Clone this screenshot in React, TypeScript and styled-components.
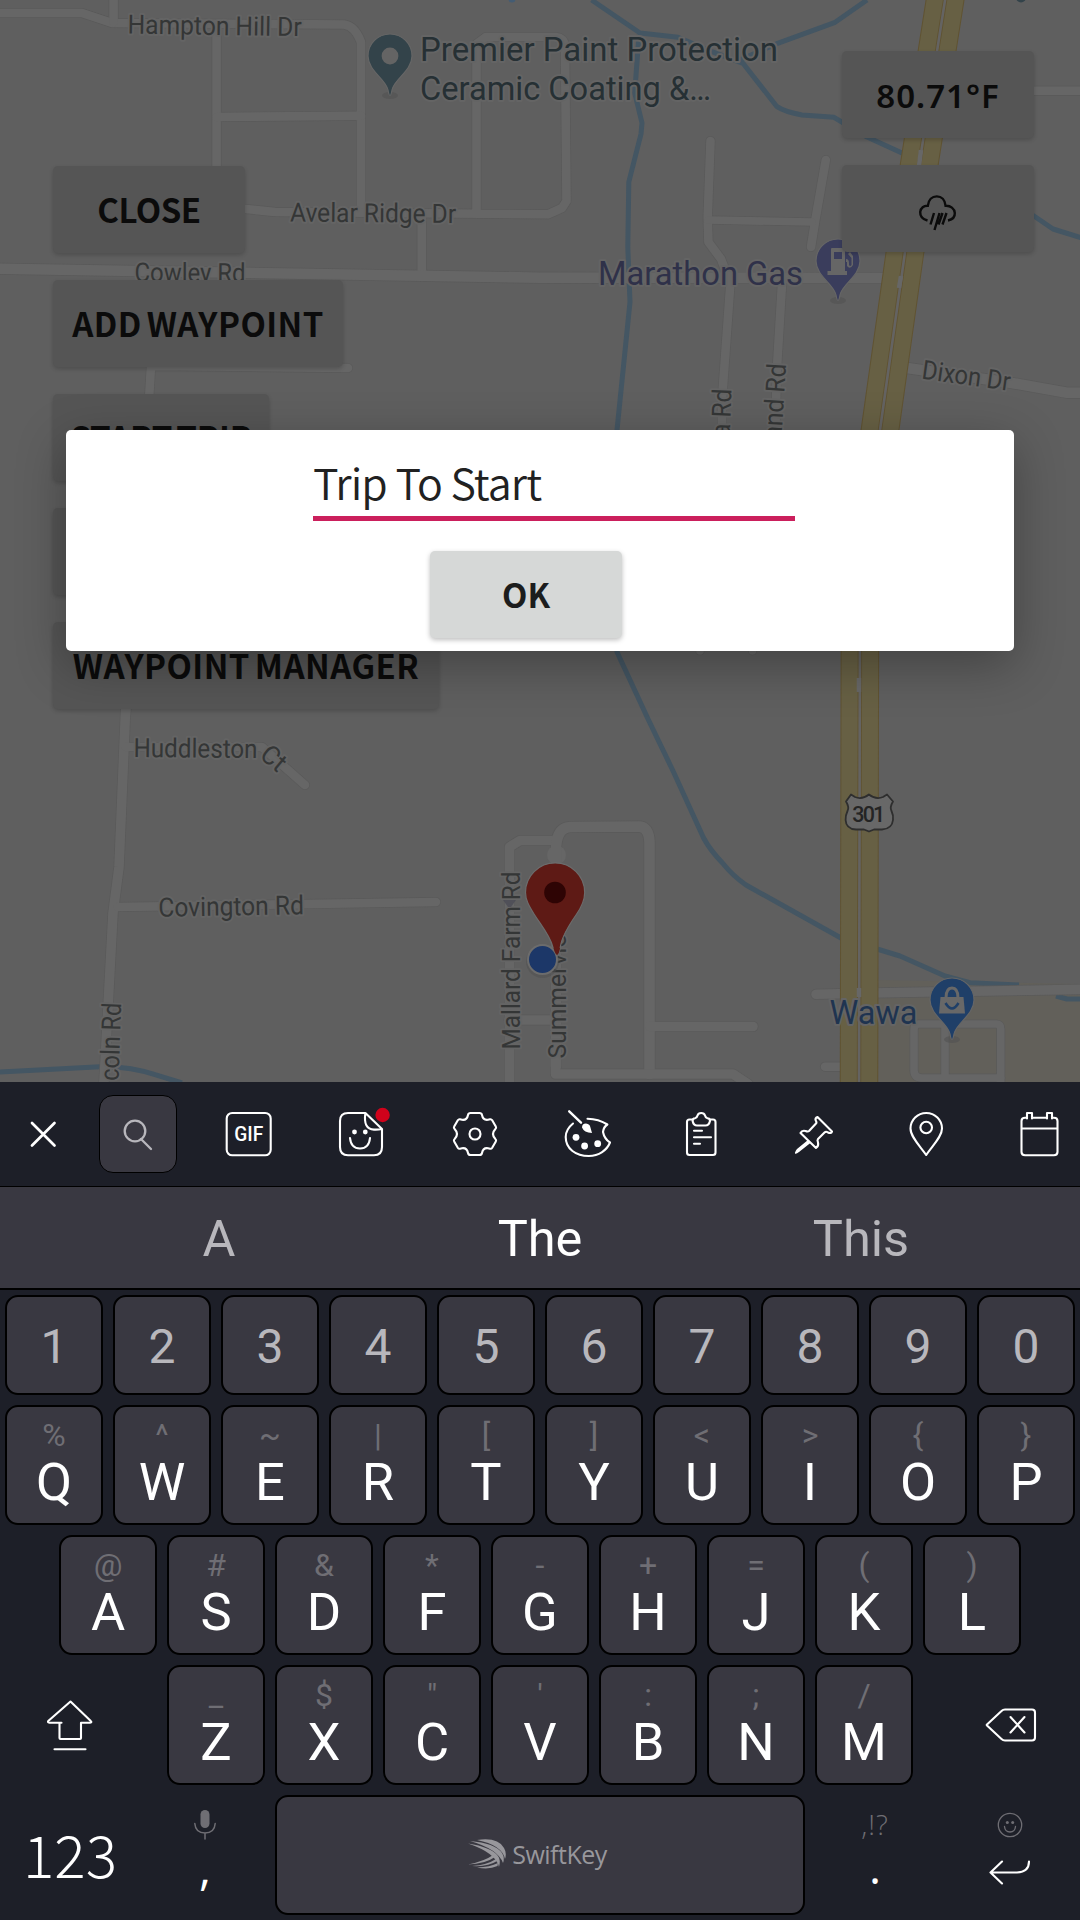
import React from "react";
import styled, { createGlobalStyle } from "styled-components";

const GlobalStyle = createGlobalStyle`
  *, *::before, *::after { box-sizing: border-box; }
  html, body { margin: 0; padding: 0; background: #1d1f28; }
  body { font-family: Roboto, "Noto Sans", sans-serif; }
  button { font: inherit; border: 0; padding: 0; background: none; color: inherit; }
`;

const SLATE = '"Noto Sans CJK JP", "Open Sans", sans-serif';

const Screen = styled.main`
  width: 1080px;
  height: 1920px;
  display: flex;
  flex-direction: column;
  overflow: hidden;
`;

/* ---------- Map ---------- */

const MapArea = styled.section`
  position: relative;
  height: 1082px;
  flex: none;
  overflow: hidden;
  background: #5f5f5f;
`;

const MapCanvas = styled.svg`
  position: absolute;
  inset: 0;
  width: 1080px;
  height: 1082px;
`;

const Controls = styled.div`
  position: relative;
  display: flex;
  justify-content: space-between;
  padding: 51px 46px 0 53px;
`;

const ControlColumn = styled.div<{ $offset?: number }>`
  display: flex;
  flex-direction: column;
  align-items: flex-start;
  gap: 27px;
  padding-top: ${(p) => p.$offset ?? 0}px;
`;

const MapButton = styled.button<{ $width?: number; $spacing?: number }>`
  width: ${(p) => p.$width ?? 192}px;
  height: 87px;
  display: flex;
  align-items: center;
  justify-content: center;
  padding-bottom: 2px;
  white-space: nowrap;
  border-radius: 5px;
  background: #555555;
  box-shadow: 0 2px 4px rgba(0, 0, 0, 0.18);
  color: #0b0b0b;
  font-family: ${SLATE};
  font-weight: 700;
  font-size: 33px;
  line-height: 40px;
  letter-spacing: ${(p) => p.$spacing ?? 0}px;
  word-spacing: -3px;
`;

const Temperature = styled(MapButton)`
  padding: 2px 0 0;
  font-family: "Noto Sans", sans-serif;
  font-weight: 600;
`;

const WeatherButton = styled(MapButton)`
  padding: 9px 0 0;
`;

/* ---------- Dialog ---------- */

const Dialog = styled.div`
  position: absolute;
  left: 66px;
  top: 430px;
  width: 948px;
  height: 221px;
  display: flex;
  flex-direction: column;
  align-items: center;
  padding-top: 19px;
  border-radius: 5px;
  background: #ffffff;
  box-shadow: 0 14px 50px rgba(0, 0, 0, 0.3);
`;

const TripField = styled.div`
  width: 482px;
  height: 72px;
  margin-left: 28px;
  border-bottom: 5px solid #cb1f5c;
  color: #212121;
  font-family: ${SLATE};
  font-weight: 350;
  font-size: 43px;
  line-height: 65px;
  letter-spacing: -0.95px;
  white-space: nowrap;
`;

const OkButton = styled(MapButton)`
  margin: 30px 28px 0 0;
  flex: none;
  background: #d6d8d7;
  color: #1c1d1d;
  box-shadow: 0 2px 5px rgba(0, 0, 0, 0.26);
`;

/* ---------- Keyboard ---------- */

const Keyboard = styled.section`
  flex: 1;
  display: flex;
  flex-direction: column;
  background: #1d1f28;
`;

const Toolbar = styled.div`
  height: 104px;
  display: flex;
  align-items: center;
  overflow: hidden;
`;

const ToolSlot = styled.button<{ $width?: number }>`
  width: ${(p) => p.$width ?? 112.8}px;
  height: 104px;
  flex: none;
  display: flex;
  align-items: center;
  justify-content: center;
`;

const SearchTile = styled.span`
  width: 78px;
  height: 78px;
  display: flex;
  align-items: center;
  justify-content: center;
  border: 1px solid #000;
  border-radius: 14px;
  background: #393841;
`;

const ToolIcon = styled.svg<{ $stroke?: number }>`
  width: 52px;
  height: 52px;
  flex: none;
  overflow: visible;
  fill: none;
  stroke: #ffffff;
  stroke-width: ${(p) => p.$stroke ?? 2.1};
  stroke-linecap: round;
  stroke-linejoin: round;
`;

const Suggestions = styled.div`
  height: 104px;
  display: grid;
  grid-template-columns: repeat(3, 321px);
  justify-content: center;
  border-top: 1px solid #000;
  border-bottom: 2px solid #000;
  background: #393841;
`;

const Suggestion = styled.span<{ $main?: boolean }>`
  text-align: center;
  font-size: 50.5px;
  line-height: 104px;
  color: ${(p) => (p.$main ? "#ffffff" : "#b8b7bc")};
`;

const Keys = styled.div`
  display: flex;
  flex-direction: column;
  gap: 10px;
  padding: 5px;
`;

const KeyRow = styled.div<{ $indent?: number; $height?: number }>`
  display: flex;
  gap: 10px;
  height: ${(p) => p.$height ?? 120}px;
  padding: 0 ${(p) => p.$indent ?? 0}px;
`;

const Key = styled.button`
  width: 98px;
  flex: none;
  display: flex;
  flex-direction: column;
  align-items: center;
  border: 2px solid #000;
  border-radius: 13px;
  background: #393841;
`;

const Digit = styled.span`
  font-size: 48px;
  line-height: 99px;
  color: #b8b7bc;
`;

const Hint = styled.span`
  height: 52px;
  padding-top: 9px;
  font-size: 32px;
  line-height: 38px;
  color: #6f6e74;
`;

const Letter = styled.span`
  font-size: 52.5px;
  line-height: 44px;
  margin-top: 1px;
  color: #ffffff;
`;

const PlainKey = styled.button<{ $width: number; $top?: number; $left?: number; $right?: number }>`
  width: ${(p) => p.$width}px;
  height: 120px;
  flex: none;
  display: flex;
  flex-direction: column;
  align-items: center;
  padding: ${(p) => p.$top ?? 0}px ${(p) => p.$right ?? 0}px 0 ${(p) => p.$left ?? 0}px;
`;

const KeyDrawing = styled.svg`
  flex: none;
  fill: none;
  stroke: #ffffff;
  stroke-width: 2.1;
  stroke-linecap: round;
  stroke-linejoin: round;
`;

const NumberMode = styled.span`
  font-family: ${SLATE};
  font-weight: 300;
  font-size: 58.5px;
  line-height: 60px;
  color: #ffffff;
`;

const PunctuationHint = styled.span`
  font-family: "Open Sans", sans-serif;
  font-weight: 300;
  font-size: 28px;
  line-height: 30px;
  letter-spacing: 1px;
  color: #6f6e74;
`;

const Punctuation = styled.span<{ $drop?: number }>`
  margin-top: ${(p) => p.$drop ?? 0}px;
  font-family: "Open Sans", sans-serif;
  font-size: 46px;
  line-height: 44px;
  color: #ffffff;
`;

const SpaceBar = styled(Key)`
  width: 530px;
  flex-direction: row;
  justify-content: center;
  gap: 5px;
  padding: 0 6px 2px 0;
`;

const Brand = styled.span`
  font-family: "Open Sans", sans-serif;
  font-size: 25px;
  line-height: 34px;
  letter-spacing: -0.5px;
  color: #98979c;
`;

/* ---------- Map drawing ---------- */

const roads: Array<[string, number]> = [
  ["M0 13H82L112 23L344 24.5Q355 26 361 42V213", 9],
  ["M113.6 0V22", 9],
  ["M216.6 28V200", 9],
  ["M217 117L361 115.7", 9],
  ["M236 208L275 212L548 214.3L562 208L566.5 201L565 46Q564 38 556 37H486L476.5 44V214", 9],
  ["M421.8 215V276", 9],
  ["M0 268.7L540 277.7L890 278", 11],
  ["M126 715L149 400L151 366L348 368", 9],
  ["M126 700L119 867L113 913L104 1082", 10],
  ["M126 747H262L305 785", 9],
  ["M118 907L436 902", 9],
  ["M509.500 1082V847L520 840.5H554", 10],
  ["M556 1066V850Q556 828 570 827L640 826.500Q649 828 649.500 842V1074", 11],
  ["M509 1020H555", 10],
  ["M650 1026.5H753", 10],
  ["M555.5 1060V1074H733L748 1084", 10],
  ["M710.5 141L707.7 217L708.4 242L721 259L730.4 283L722 400V440", 9],
  ["M825.8 160L815 222L811 247", 9],
  ["M708 220L812 222", 8],
  ["M782 284L777 367L775 440", 9],
  ["M700 640V651M752.5 640V651", 8],
  ["M1030 90.7H1080", 9],
  ["M900 367L1012 383L1067 392.7H1085", 11],
  ["M816 994.3L884 992.7L1085 989.3", 10],
  ["M825 1066.7H850", 9],
  ["M919 1024H996Q1000.7 1024 1000.7 1029V1082M919 1024Q914 1024 914 1030V1070Q914 1078 922 1078H1001M945 1024V1078", 8],
];

const streams = [
  "M591.6 0L640 33L678 37.3L712 51.7L743 63.3L777 106.7Q785 112 802 115L834 117.3L867 137L902 153L1034 216L1053 229L1085 239",
  "M867 0L834.4 22.7L777.6 43.3L740 60",
  "M639 35L634.7 93L642 123L641 134L628.8 182L627.8 247L630 302L617 430V652L648.5 720L672.6 770L703.6 838Q710 850 722.5 863Q733 876 746 885L841 938L900 956L945 976L970 982.7L1019 985",
  "M1056 996L1067 999H1085",
  "M0 1072L100 1066.7Q130 1066 155 1074.7L182 1083",
];

const highway = "M946 -6L919 166L905 252L880 430L860 590L859 1090";

type LabelData = { t: string; x: number; y: number; w?: number; r?: number; end?: boolean };
const streetLabels: LabelData[] = [
  { t: "Hampton Hill Dr", x: 127.5, y: 33.5, w: 174, r: 0.9 },
  { t: "Avelar Ridge Dr", x: 290, y: 221.5, w: 166, r: 0.5 },
  { t: "Cowley Rd", x: 134.5, y: 281.5, w: 111, r: 0.3 },
  { t: "Dixon Dr", x: 921, y: 378.5, w: 89, r: 8 },
  { t: "a Rd", x: 731.5, y: 389, w: 48, r: -88, end: true },
  { t: "and Rd", x: 786, y: 364, w: 76, r: -86.5, end: true },
  { t: "Huddleston", x: 133.5, y: 757, w: 124, r: 0.5 },
  { t: "Ct", x: 258.5, y: 757, w: 25, r: 40 },
  { t: "Covington Rd", x: 158.5, y: 916.7, w: 145.5, r: -1 },
  { t: "coln Rd", x: 118.5, y: 1081, w: 78, r: -88 },
  { t: "Mallard Farm Rd", x: 519.5, y: 1049.5, w: 178, r: -90 },
  { t: "Summervie", x: 566, y: 1058.5, w: 124, r: -90 },
];

const StreetName = styled.text`
  font-family: Roboto, sans-serif;
  font-size: 26.5px;
  fill: #343636;
  stroke: #646464;
  stroke-width: 4px;
  paint-order: stroke;
  stroke-linejoin: round;
`;

const PlaceName = styled(StreetName)<{ $color: string }>`
  font-size: 34px;
  fill: ${(p) => p.$color};
`;

const ShieldNumber = styled.text`
  font-family: Roboto, sans-serif;
  font-weight: 500;
  font-size: 21.5px;
  fill: #242424;
`;

const GifText = styled.text`
  font-family: Roboto, sans-serif;
  font-weight: 500;
  font-size: 20px;
  fill: #ffffff;
  stroke: none;
`;

const PinShape = ({ x, y, color }: { x: number; y: number; color: string }) => (
  <g>
    <ellipse cx={x} cy={y + 39.5} rx="8" ry="3.5" fill="#525252" opacity=".6" />
    <path
      d={`M${x} ${y + 39.5}Q${x - 1} ${y + 39.5} ${x - 2} ${y + 34}C${x - 4} ${y + 23} ${x - 22} ${y + 15} ${x - 22} ${y}A22 22 0 0 1 ${x + 22} ${y}C${x + 22} ${y + 15} ${x + 4} ${y + 23} ${x + 2} ${y + 34}Q${x + 1} ${y + 39.5} ${x} ${y + 39.5}Z`}
      fill={color}
      stroke="#666"
      strokeWidth="1.2"
    />
  </g>
);

const MapDrawing = () => (
  <MapCanvas viewBox="0 0 1080 1082">
    <rect width="1080" height="1082" fill="#5f5f5f" />
    <path d="M878 980L1080 984V1082H878Z" fill="#62605a" />
    <g fill="none" stroke="#445663" strokeWidth="5" strokeLinejoin="round">
      {streams.map((d) => <path key={d} d={d} />)}
    </g>
    <g fill="none" stroke="#5a5a5a" strokeLinecap="round" strokeLinejoin="round">
      {roads.map(([d, w]) => <path key={d} d={d} strokeWidth={w + 1} />)}
    </g>
    <circle cx="556.5" cy="855" r="9.500" fill="#666666" />
    <g fill="none" stroke="#666666" strokeLinecap="round" strokeLinejoin="round">
      {roads.map(([d, w]) => <path key={d} d={d} strokeWidth={w - 0.4} />)}
    </g>
    <g fill="none" strokeLinejoin="round">
      <path d={highway} stroke="#605332" strokeWidth="38.5" />
      <path d={highway} stroke="#676044" strokeWidth="36.5" />
      <path d={highway} stroke="#605332" strokeWidth="4.4" />
      <path d={highway} stroke="#646362" strokeWidth="2.6" />
      <path d="M921 150L918.5 170M901 276L899 288M859 678V692M859 988V997" stroke="#676767" strokeWidth="4.5" />
    </g>
    {streetLabels.map((l) => (
      <StreetName
        key={l.t}
        x={l.x}
        y={l.y}
        textAnchor={l.end ? "end" : "start"}
        textLength={l.w}
        lengthAdjust="spacingAndGlyphs"
        transform={`rotate(${l.r ?? 0} ${l.x} ${l.y})`}
      >
        {l.t}
      </StreetName>
    ))}
    <path d="M503 900H516L511 907H508Z" fill="#4b4b55" opacity=".8" />
    <PlaceName $color="#263034" x="420" y="61" textLength="358" lengthAdjust="spacingAndGlyphs">Premier Paint Protection</PlaceName>
    <PlaceName $color="#263034" x="420" y="100" textLength="291" lengthAdjust="spacingAndGlyphs">Ceramic Coating &amp;…</PlaceName>
    <PlaceName $color="#2f3149" x="598" y="285.000" textLength="205" lengthAdjust="spacingAndGlyphs">Marathon Gas</PlaceName>
    <PlaceName $color="#1f3450" x="829.500" y="1024" textLength="88" lengthAdjust="spacingAndGlyphs">Wawa</PlaceName>

    <PinShape x={390} y={56} color="#33434a" />
    <circle cx="390" cy="56" r="8.400" fill="#646464" />
    <PinShape x={838} y={261} color="#3a3d5c" />
    <g fill="#666">
      <path d="M831 249Q831 248 832 248H844Q845 248 845 249V271H847V275H827.500V271H831ZM834 252V259H842V252Z" fillRule="evenodd" />
      <path d="M846 259Q849 259 849 263V265Q850 267 851.500 265V258L848 254L850 252L853 256V265Q850 270 847 266V262H846Z" />
    </g>
    <PinShape x={952} y={1000} color="#1f3f68" />
    <path d="M940.500 997H963.500L965 1013.500H939Z" fill="#686868" />
    <path d="M946 998Q946 988 952 988Q958 988 958 998" fill="none" stroke="#686868" strokeWidth="3" />
    <path d="M945.500 1003Q952 1014 958.500 1003" fill="none" stroke="#1f3f68" strokeWidth="2.500" />
    <circle cx="1021" cy="-2.500" r="5" fill="#33434a" />
    <circle cx="512" cy="-1" r="3.500" fill="#445c73" />

    <path d="M851 794.500L855 797Q862 800 868.900 794.500Q876 800 883 797L887 794.500L893 801.500Q889.500 807 891.500 811Q893.500 815 893 820Q892 829 882 829.500H874L869 831.500L864 829.500H856Q846 829 845.600 820Q845.500 815 847.500 811Q849.500 807 846 801.500Z" fill="#686868" stroke="#2e2e2e" strokeWidth="1.800" strokeLinejoin="round" />
    <ShieldNumber x="868.800" y="821.500" textAnchor="middle" textLength="33">301</ShieldNumber>

    <path d="M557 955Q554.500 954 552.500 946C550 936 543 928 534 914C529 906 525.500 900 525.500 892.500A29.600 29.600 0 0 1 584.700 892.500C584.700 901 581 908 576 915C567 928 562 937 560.500 946Q559.500 954 557 955Z" fill="#5e1a15" stroke="#6c6c6c" strokeWidth="1.200" />
    <circle cx="555" cy="892.500" r="10.800" fill="#2e0404" />
    <circle cx="542.500" cy="961.500" r="16.500" fill="#505050" opacity=".5" />
    <circle cx="542.500" cy="959.500" r="14.500" fill="#1c3768" stroke="#6c6c6c" strokeWidth="2" />
    <path d="M557 955Q555 954 553.500 948L560 948Q559 954 557 955Z" fill="#5e1a15" />
  </MapCanvas>
);

/* ---------- Keyboard data ---------- */

const digits = "1234567890".split("");
const rowQ = ["Q%", "W^", "E~", "R|", "T[", "Y]", "U<", "I>", "O{", "P}"];
const rowA = ["A@", "S#", "D&", "F*", "G-", "H+", "J=", "K(", "L)"];
const rowZ = ["Z_", "X$", 'C"', "V'", "B:", "N;", "M/"];

const LetterKey = ({ pair }: { pair: string }) => (
  <Key>
    <Hint>{pair[1]}</Hint>
    <Letter>{pair[0]}</Letter>
  </Key>
);

const App = () => (
  <>
    <GlobalStyle />
    <Screen>
      <MapArea>
        <MapDrawing />
        <Controls>
          <ControlColumn $offset={115}>
            <MapButton $spacing={-0.5}>CLOSE</MapButton>
            <MapButton $width={290} $spacing={0.45}>ADD WAYPOINT</MapButton>
            <MapButton $width={216} $spacing={-0.2}>START TRIP</MapButton>
            <MapButton $width={216} />
            <MapButton $width={386} $spacing={0.45}>WAYPOINT MANAGER</MapButton>
          </ControlColumn>
          <ControlColumn>
            <Temperature $spacing={1}>80.71°F</Temperature>
            <WeatherButton aria-label="Rain">
              <svg width="40" height="40" viewBox="0 0 40 40" fill="none" stroke="#0b0b0b" strokeWidth="2.400" strokeLinecap="butt">
                <path d="M9.500 27.500C4 26 2 23 2.200 19C2.600 15 6 12.500 9.800 12.800C10.500 7 14 3.400 18.800 3.400C23.500 3.400 27 7 27.600 12.800C32.500 12.500 36.500 15.500 36.800 20C37 23.500 34.500 26.500 30 27.500" />
                <path d="M16 20L12.500 31.500M21.500 20L16.500 37M24.500 20L20.500 31.500M28.500 20L24.500 31.500" />
              </svg>
            </WeatherButton>
          </ControlColumn>
        </Controls>
        <Dialog>
          <TripField>Trip To Start</TripField>
          <OkButton>OK</OkButton>
        </Dialog>
      </MapArea>

      <Keyboard>
        <Toolbar>
          <ToolSlot $width={83} aria-label="Close">
            <ToolIcon viewBox="0 0 52 52" $stroke={2.700}><path d="M16 15L38.500 37.500M38.500 15L16 37.500" /></ToolIcon>
          </ToolSlot>
          <ToolSlot $width={110} aria-label="Search">
            <SearchTile>
              <ToolIcon viewBox="0 0 52 52" $stroke={2.300}><g stroke="#b8b7bc"><circle cx="23" cy="23" r="10.300" /><path d="M29 31L39 41" /></g></ToolIcon>
            </SearchTile>
          </ToolSlot>
          <ToolSlot aria-label="GIF">
            <ToolIcon viewBox="0 0 52 52">
              <rect x="3.700" y="5" width="44" height="42.300" rx="5.500" />
              <GifText x="25.700" y="33" textAnchor="middle" textLength="29" lengthAdjust="spacingAndGlyphs">GIF</GifText>
            </ToolIcon>
          </ToolSlot>
          <ToolSlot aria-label="Stickers">
            <ToolIcon viewBox="0 0 52 52">
              <path d="M29.400 5H12Q4 5 4 13V39Q4 47.300 12 47.300H38Q46 47.300 46 39V21ZM29.400 5Q27 21 38 21.600Q42 21.800 46 21" />
              <path d="M14 30Q15 40.500 24 40.500Q33 40.500 34 30" />
              <g fill="#fff" stroke="none"><circle cx="18.500" cy="24" r="2.400" /><circle cx="29.300" cy="24" r="2.400" /></g>
              <circle cx="46.600" cy="7" r="7.200" fill="#d0021b" stroke="none" />
            </ToolIcon>
          </ToolSlot>
          <ToolSlot aria-label="Settings">
            <ToolIcon viewBox="0 0 52 52">
              <path d="M30.500 5Q32.600 5 33 7Q34 12.500 39 11.800L41 11.300Q42.400 11 43.200 12.300L46.800 18.600Q47.600 20 46.400 21Q41.600 26 46.400 31Q47.600 32 46.800 33.400L43.200 39.700Q42.400 41 41 40.700L39 40.200Q34 39.500 33 45Q32.600 47 30.500 47H21.500Q19.400 47 19 45Q18 39.500 13 40.200L11 40.700Q9.600 41 8.800 39.700L5.200 33.400Q4.400 32 5.600 31Q10.400 26 5.600 21Q4.400 20 5.200 18.600L8.800 12.300Q9.600 11 11 11.300L13 11.800Q18 12.500 19 7Q19.400 5 21.500 5Z" />
              <circle cx="26" cy="26" r="5.500" />
            </ToolIcon>
          </ToolSlot>
          <ToolSlot aria-label="Themes">
            <ToolIcon viewBox="0 0 52 52">
              <path d="M11 15.500C5.500 20 3.700 24 3.700 29C3.700 41 14 48 26.800 48C37 48 45 42 48 34.500C44 32 42 29 41 24C41.500 20 43 18 45.400 16.500C40 13 33 10.800 25.500 10.700" />
              <path d="M7.200 3.300L19 14.700" strokeWidth="2.400" />
              <path d="M20 19.500Q20 15.500 24 15.500Q28 16 28.300 19L30 25Q22 24.500 20 19.500Z" fill="#fff" stroke="none" />
              <g fill="#fff" stroke="none"><circle cx="14" cy="29.300" r="3.400" /><circle cx="22.600" cy="38" r="3.400" /><circle cx="35.700" cy="35.700" r="3.400" /></g>
            </ToolIcon>
          </ToolSlot>
          <ToolSlot aria-label="Clipboard">
            <ToolIcon viewBox="0 0 52 52">
              <path d="M17.500 11.500H14.500Q12 11.500 12 14V44.500Q12 47 14.500 47H38Q40.500 47 40.500 44.500V14Q40.500 11.500 38 11.500H35" />
              <path d="M17.600 13Q17.600 10.500 20 10.300Q22 9.800 22.500 7.500Q23.300 5 26.200 5Q29.200 5 30 7.500Q30.500 9.800 32.500 10.300Q35 10.500 35 13Q34 17.500 30.500 17.500H22Q18.500 17.500 17.600 13Z" />
              <path d="M19 22.700H27M19 29.300H36M19 35.700H25" />
            </ToolIcon>
          </ToolSlot>
          <ToolSlot aria-label="Pin">
            <ToolIcon viewBox="0 0 52 52">
              <path d="M30.500 9L45 23.500Q44 26 41 24.500Q39 23 37.500 24.500L31 31Q30 32 31 34.500Q32 38 29 40L13.500 25Q15 22 18.500 23Q21 24 22 23L29 15.500Q30 14.500 28.700 12.500Q27.800 10 30.500 9Z" />
              <path d="M21 32L24 34.500L12 44Q9 46.500 8 45.500Q7.500 44.500 10 41Z" fill="#fff" stroke="none" />
            </ToolIcon>
          </ToolSlot>
          <ToolSlot aria-label="Location">
            <ToolIcon viewBox="0 0 52 52">
              <path d="M26.200 47C20 38 10.500 29 10.500 20.500A15.700 15.500 0 0 1 42 20.500C42 29 32 38 26.200 47Z" />
              <circle cx="26.200" cy="19.500" r="5.800" />
            </ToolIcon>
          </ToolSlot>
          <ToolSlot aria-label="Calendar">
            <ToolIcon viewBox="0 0 52 52">
              <path d="M14 9.800H12Q8.500 9.800 8.500 13V44Q8.500 47.200 12 47.200H41Q44.500 47.200 44.500 44V13Q44.500 9.800 41 9.800H39M19 9.800H34M8.500 20.500H44.500" />
              <path d="M14 10.500V5H19V10.500M34 10.500V5H39V10.500" />
            </ToolIcon>
          </ToolSlot>
        </Toolbar>

        <Suggestions>
          <Suggestion>A</Suggestion>
          <Suggestion $main>The</Suggestion>
          <Suggestion>This</Suggestion>
        </Suggestions>

        <Keys>
          <KeyRow $height={100}>
            {digits.map((d) => <Key key={d}><Digit>{d}</Digit></Key>)}
          </KeyRow>
          <KeyRow>{rowQ.map((k) => <LetterKey key={k} pair={k} />)}</KeyRow>
          <KeyRow $indent={54}>{rowA.map((k) => <LetterKey key={k} pair={k} />)}</KeyRow>
          <KeyRow>
            <PlainKey $width={152} $top={32} $right={22} aria-label="Shift">
              <KeyDrawing width="50" height="56" viewBox="0 0 50 56">
                <path d="M16 25.800H4Q1.500 25.500 3 23.700L25 4.500L45 23.700Q47 25.500 44.500 25.800H35.500V41Q35.500 42 34.500 42H15Q14 42 14 41V25.800Z" transform="translate(0.500 0)" />
                <path d="M9.500 52.300H40.500" />
              </KeyDrawing>
            </PlainKey>
            {rowZ.map((k) => <LetterKey key={k} pair={k} />)}
            <PlainKey $width={152} $top={40} $left={23} aria-label="Backspace">
              <KeyDrawing width="54" height="40" viewBox="-16 0 54 40">
                <path d="M5 4.500H32Q35 4.500 35 7.500V32.500Q35 35.500 32 35.500H5Q3 35.500 1.500 34L-13 20.500Q-13.500 20 -13 19.500L1.500 6Q3 4.500 5 4.500Z" />
                <path d="M10.500 12L24.500 27.500M24.500 12L10.500 27.500" />
              </KeyDrawing>
            </PlainKey>
          </KeyRow>
          <KeyRow>
            <PlainKey $width={130} $top={28}>
              <NumberMode>123</NumberMode>
            </PlainKey>
            <PlainKey $width={120} $top={14}>
              <KeyDrawing width="24" height="32" viewBox="0 0 24 32">
                <rect x="7.500" y="1" width="9" height="18" rx="4.500" fill="#6f6e74" stroke="none" />
                <path d="M1.800 14.500Q2.500 24 12 24Q21.500 24 22.200 14.500M12 24V30" stroke="#6f6e74" strokeWidth="1.500" />
              </KeyDrawing>
              <Punctuation $drop={4}>,</Punctuation>
            </PlainKey>
            <SpaceBar>
              <KeyDrawing width="40" height="32" viewBox="0 0 40 32">
                <g fill="#98979c" stroke="none">
                  <path d="M10 2Q31 -1 37 10Q40 15 38 21Q35 7 10 2Z" />
                  <path d="M3 3Q28 5 35 15Q38 20 36 25Q31 11 3 3Z" />
                  <path d="M1 5.500Q24 9 31 18Q34 22 32 29Q29 15 1 5.500Z" />
                  <path d="M1 26.500Q18 23 26 17L28 19Q18 26 1 26.500Z" />
                  <path d="M5 28Q20 27 29 21L30 23Q21 29 5 28Z" />
                  <path d="M10 29.500Q23 29 31 25L30.500 28Q22 32 10 29.500Z" />
                </g>
              </KeyDrawing>
              <Brand>SwiftKey</Brand>
            </SpaceBar>
            <PlainKey $width={120} $top={14}>
              <PunctuationHint>,!?</PunctuationHint>
              <Punctuation $drop={5}>.</Punctuation>
            </PlainKey>
            <PlainKey $width={130} $top={16} aria-label="Enter">
              <KeyDrawing width="28" height="28" viewBox="0 0 28 28">
                <g stroke="#6f6e74" strokeWidth="1.300">
                  <circle cx="14" cy="14" r="11.700" />
                  <path d="M8.500 15.500Q9 21 14 21Q19 21 19.500 15.500" />
                </g>
                <g fill="#6f6e74" stroke="none"><circle cx="11.300" cy="11.500" r="1.500" /><circle cx="16.700" cy="11.500" r="1.500" /></g>
              </KeyDrawing>
              <KeyDrawing width="44" height="50" viewBox="0 0 44 50">
                <path d="M14 22.500L2.500 33.500L14 44.500M2.500 33.500H29Q41 33 41 22.500" />
              </KeyDrawing>
            </PlainKey>
          </KeyRow>
        </Keys>
      </Keyboard>
    </Screen>
  </>
);

export default App;
